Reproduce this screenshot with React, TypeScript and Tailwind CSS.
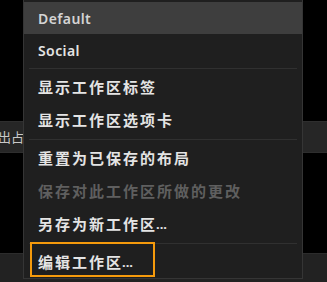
import React from "react";

type Item =
  | { kind: "item"; label: string; dots?: boolean; latin?: boolean; active?: boolean; disabled?: boolean; h: number }
  | { kind: "sep" };

const items: Item[] = [
  { kind: "item", label: "Default", latin: true, active: true, h: 32 },
  { kind: "item", label: "Social", latin: true, h: 32 },
  { kind: "sep" },
  { kind: "item", label: "显示工作区标签", h: 33 },
  { kind: "item", label: "显示工作区选项卡", h: 33 },
  { kind: "sep" },
  { kind: "item", label: "重置为已保存的布局", h: 33 },
  { kind: "item", label: "保存对此工作区所做的更改", disabled: true, h: 33 },
  { kind: "item", label: "另存为新工作区", dots: true, h: 33 },
  { kind: "sep" },
  { kind: "item", label: "编辑工作区", dots: true, h: 33 },
];

export default function App() {
  return (
    <div
      className="relative w-[327px] h-[282px] overflow-hidden bg-black"
      style={{ fontFamily: '"Noto Sans", "Noto Sans CJK SC", sans-serif' }}
    >
      {/* background app */}
      <div className="flex flex-col h-full">
        <div className="h-[121px]" />
        <div className="h-[32px] flex bg-[#262626] border-y border-[#2e2e2e]">
          <div className="w-[23px] overflow-hidden flex items-center">
            <span className="text-[13px] leading-none text-[#c8c8c8] whitespace-nowrap -ml-[2px] tracking-[0px]">出占</span>
          </div>
          <div className="flex-1" />
        </div>
        <div className="flex-1" />
        <div className="h-[29px] bg-[#222222] border-t border-[#2c2c2c]" />
      </div>

      {/* dropdown menu */}
      <div className="absolute left-[23px] top-0 w-[280px] h-[279px] bg-[#1f1f1f] border-x border-b border-[#353535] pt-[2px]">
        {items.map((it, i) =>
          it.kind === "sep" ? (
            <div key={i} className="h-[5px] flex items-center px-[5px]">
              <div className="h-px w-full bg-[#303030]" />
            </div>
          ) : (
            <div
              key={i}
              className={`flex items-center pl-[14px] whitespace-nowrap ${
                it.active ? "bg-[#3e3e3e]" : ""
              } ${
                it.latin ? "text-[14px] tracking-[0.4px] font-semibold" : "text-[15px] tracking-[2px] font-bold"
              } ${
                it.disabled ? "text-[#5f5f5f]" : it.active ? "text-[#d4d4d4]" : "text-[#e4e4e4]"
              }`}
              style={{ height: it.h }}
            >
              {it.label}
              {it.dots ? <span className="tracking-[0px] text-[13px] -ml-[1px]">...</span> : null}
            </div>
          )
        )}
      </div>

      {/* highlight annotation */}
      <div className="absolute left-[30px] top-[242px] w-[125px] h-[35px] border-2 border-[#f59a0c]" />
    </div>
  );
}
